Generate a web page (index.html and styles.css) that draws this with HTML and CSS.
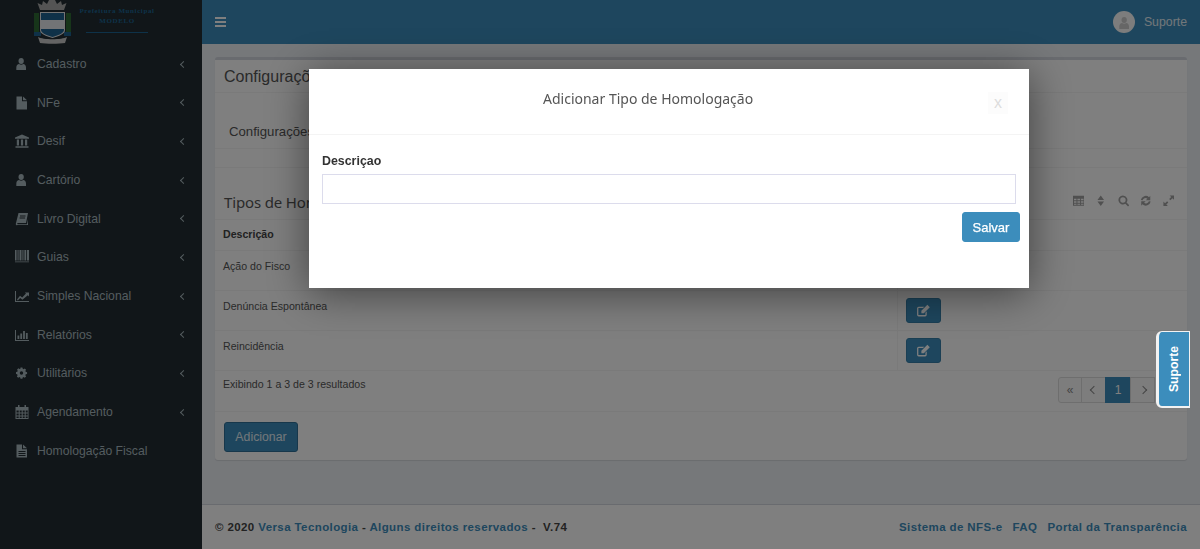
FILE: index.html
```html
<!DOCTYPE html>
<html lang="pt-BR">
<head>
  <meta charset="UTF-8" />
  <title>Tipos de Homologação</title>
  <link rel="stylesheet" href="styles.css">
</head>
<body>
  <svg class="sprites" aria-hidden="true">
    <defs>
      <symbol id="i-user" viewBox="0 0 14 14"><g transform="scale(.88 1)"><circle cx="7" cy="4" r="3"/><path d="M1.500 13v-2.600C1.500 8.400 3 7 4.600 7c.7.500 1.500.8 2.400.8s1.700-.3 2.400-.8c1.600 0 3.100 1.400 3.100 3.400V13z"/></g></symbol>
      <symbol id="i-file" viewBox="0 0 14 14"><path d="M1.500 .5h5.500v4.700h5V13.500H1.500z"/><path d="M8 .5l4 3.700H8z"/></symbol>
      <symbol id="i-bank" viewBox="0 0 14 14"><path d="M7 .5 14 3.500v1.200H0V3.500zM.5 12.200h13v1.500H.5zM1.800 5.500h2.200v6H1.800zM5.900 5.500h2.200v6H5.900zM10 5.500h2.200v6H10z"/></symbol>
      <symbol id="i-book" viewBox="0 0 14 14"><path d="M3.500 1H13l-2 10H2.800c-.8 0-.8 1.300 0 1.300H12l1-5v5.700H2.500C1 14 .5 12.500 1 11zM5 3.500v1h5.500v-1zM4.600 5.500v1h5.500v-1z" fill-rule="evenodd"/></symbol>
      <symbol id="i-barcode" viewBox="0 0 14 14"><path d="M0 0h1.600v10.500H0zM2.500 0h1.100v10.500H2.500zM4.500 0h2v10.500h-2zM7.400 0h1.100v10.500H7.400zM9.400 0h1.800v10.500H9.400zM12 0h2v10.500h-2zM0 11.500h14v.8H0z"/></symbol>
      <symbol id="i-line" viewBox="0 0 14 14"><path d="M0 2h1v10h13v1H0z"/><path d="M2 10.500 5 6.800l2.200 1.700L11 4.500 9.800 3.500H14v3.900l-1.200-1.200-5.400 4.600L5.200 9l-2.400 2.500z"/></symbol>
      <symbol id="i-chart" viewBox="0 0 14 14"><path d="M0 2h1v10h13v1H0zM2.500 7.500h1.800V11H2.500zM5.300 5.500h1.800V11H5.300zM8.100 3h1.800v8H8.100zM10.900 5h1.800v6h-1.800z"/></symbol>
      <symbol id="i-cog" viewBox="0 0 14 14"><path fill-rule="evenodd" transform="translate(1 1.500) scale(.78)" d="M5.800 0h2.400l.4 1.700 1.100.5 1.500-.9 1.700 1.700-.9 1.500.5 1.100 1.700.4v2.400l-1.700.4-.5 1.100.9 1.500-1.700 1.700-1.500-.9-1.100.5-.4 1.700H5.800l-.4-1.700-1.100-.5-1.500.9-1.700-1.700.9-1.500-.5-1.100L0 8.200V5.800l1.700-.4.500-1.100-.9-1.500L3 1.100l1.500.9 1.100-.5zM7 4.800a2.200 2.200 0 1 0 0 4.400 2.200 2.200 0 0 0 0-4.400z"/></symbol>
      <symbol id="i-calendar" viewBox="0 0 14 14"><path fill-rule="evenodd" d="M3 0h1.500v2H9.500V0H11v2h2.500v12H.5V2H3zM1.500 5.500v2h2.200v-2zm3.200 0v2h2v-2zm3 0v2h2v-2zm3 0v2h2v-2zM1.500 8.500v2h2.200v-2zm3.200 0v2h2v-2zm3 0v2h2v-2zm3 0v2h2v-2zM1.500 11.500V13h2.200v-1.500zm3.200 0V13h2v-1.500zm3 0V13h2v-1.500zm3 0V13h2v-1.500z"/></symbol>
      <symbol id="i-table" viewBox="0 0 14 14"><path fill-rule="evenodd" d="M0 1h14v12H0zM1.200 4.500v2h3v-2zm4.200 0v2h3.200v-2zm4.400 0v2h3v-2zM1.200 7.500v2h3v-2zm4.200 0v2h3.200v-2zm4.400 0v2h3v-2zM1.200 10.500V12h3v-1.500zm4.200 0V12h3.200v-1.500zm4.400 0V12h3v-1.500z"/></symbol>
      <symbol id="i-doc" viewBox="0 0 14 14"><path fill-rule="evenodd" d="M1.500 .5h5.500v4.700h5v8.300H1.500zM3.500 7v1h7V7zM3.500 9v1h7V9zM3.500 11v1h7v-1z"/><path d="M8 .5l4 3.700H8z"/></symbol>
      <symbol id="i-edit" viewBox="0 0 14 14"><path d="M10 7.800V11a1.500 1.500 0 0 1-1.500 1.500h-6A1.500 1.500 0 0 1 1 11V5a1.500 1.500 0 0 1 1.500-1.500h5.200L6.500 4.700h-4a.3.3 0 0 0-.3.3v6c0 .2.1.3.3.3h6c.2 0 .3-.1.3-.3V9z"/><path d="M5 7.200 10.600 1.600l2.300 2.300-5.600 5.600H5z"/></symbol>
    </defs>
  </svg>

  <aside class="sidebar">
    <div class="logo">
      <svg class="crest" viewBox="0 0 38 44" aria-hidden="true">
        <path d="M6 10 3.500 3 8 5 9 1l4 3 2-4h6l2 4 4-3 1 4 4.500-2L30 10z" fill="#a8a8a8"/>
        <path d="M0 13h5v19H0zM32 13h5v19h-5z" fill="#2e6b35"/>
        <path d="M0 32h7v4H0zM30 32h7v4h-7z" fill="#1f6291"/>
        <path d="M6 12h25v18c0 4-6 6-12.500 8C12 36 6 34 6 30z" fill="#e8e8e8"/>
        <path d="M7 13h23v17c0 3-5 5-11.500 7C12 35 7 33 7 30z" fill="#1f6291"/>
        <path d="M7 20h23v9H7z" fill="#e4e8ec"/>
        <path d="M4 37c5 3 24 3 29 0l-2 6c-6 1-19 1-25 0z" fill="#c8c8c8"/>
      </svg>
      <div class="logo-text">
        <span>Prefeitura Municipal</span>
        <span>MODELO</span>
        <i class="logo-line"></i>
      </div>
    </div>
    <ul class="menu">
      <li><svg class="ico"><use href="#i-user"/></svg>Cadastro<b class="arrow"></b></li>
      <li><svg class="ico"><use href="#i-file"/></svg>NFe<b class="arrow"></b></li>
      <li><svg class="ico"><use href="#i-bank"/></svg>Desif<b class="arrow"></b></li>
      <li><svg class="ico"><use href="#i-user"/></svg>Cartório<b class="arrow"></b></li>
      <li><svg class="ico"><use href="#i-book"/></svg>Livro Digital<b class="arrow"></b></li>
      <li><svg class="ico"><use href="#i-barcode"/></svg>Guias<b class="arrow"></b></li>
      <li><svg class="ico"><use href="#i-line"/></svg>Simples Nacional<b class="arrow"></b></li>
      <li><svg class="ico"><use href="#i-chart"/></svg>Relatórios<b class="arrow"></b></li>
      <li><svg class="ico"><use href="#i-cog"/></svg>Utilitários<b class="arrow"></b></li>
      <li><svg class="ico"><use href="#i-calendar"/></svg>Agendamento<b class="arrow"></b></li>
      <li><svg class="ico"><use href="#i-doc"/></svg>Homologação Fiscal</li>
    </ul>
  </aside>

  <div class="main">
    <header class="topbar">
      <div class="burger"><i></i><i></i><i></i></div>
      <div class="account">
        <span class="avatar"><svg viewBox="0 0 14 14"><use href="#i-user"/></svg></span>
        Suporte
      </div>
    </header>

    <main class="content">
      <section class="box">
        <h2 class="box-title">Configurações</h2>
        <div class="config-row">Configurações</div>
        <div class="spacer-row"></div>
        <div class="list-head">
          <h3>Tipos de Homologação</h3>
          <div class="tools">
            <svg viewBox="0 0 14 14"><use href="#i-table"/></svg>
            <svg viewBox="0 0 14 14"><path d="M7 .5l4 5.500H3zM7 13.500 3 8h8z"/></svg>
            <svg viewBox="0 0 14 14"><path fill-rule="evenodd" d="M6 .5a5.500 5.500 0 0 1 4.400 8.700l3.300 3.300-1.500 1.500-3.300-3.300A5.500 5.500 0 1 1 6 .5zm0 2.200a3.300 3.300 0 1 0 0 6.600 3.300 3.300 0 0 0 0-6.600z"/></svg>
            <svg viewBox="0 0 14 14"><path d="M1 6a6 6 0 0 1 10-3.300L12.500 1v5.500H7l2-2A3.800 3.800 0 0 0 3.200 6.500zM13 8A6 6 0 0 1 3 11.300L1.500 13V7.500H7l-2 2a3.800 3.800 0 0 0 5.800-2z"/></svg>
            <svg viewBox="0 0 14 14"><path d="M8 .5h5.500V6l-2-2L9 6.500 7.500 5 10 2.500zM6 13.500H.5V8l2 2L5 7.500 6.500 9 4 11.500z"/></svg>
          </div>
        </div>
        <div class="row row-head"><div class="cell-name">Descrição</div><div class="cell-act"></div></div>
        <div class="row"><div class="cell-name">Ação do Fisco</div><div class="cell-act"><span class="btn-edit"><svg viewBox="0 0 14 14"><use href="#i-edit"/></svg></span></div></div>
        <div class="row"><div class="cell-name">Denúncia Espontânea</div><div class="cell-act"><span class="btn-edit"><svg viewBox="0 0 14 14"><use href="#i-edit"/></svg></span></div></div>
        <div class="row"><div class="cell-name">Reincidência</div><div class="cell-act"><span class="btn-edit"><svg viewBox="0 0 14 14"><use href="#i-edit"/></svg></span></div></div>
        <div class="table-foot">
          <span>Exibindo 1 a 3 de 3 resultados</span>
          <ul class="pager">
            <li>«</li>
            <li><b class="chev left"></b></li>
            <li class="active">1</li>
            <li><b class="chev right"></b></li>
          </ul>
        </div>
        <div class="box-foot"><button class="btn-add" type="button">Adicionar</button></div>
      </section>
    </main>

    <footer class="footer">
      <div>© 2020 <a>Versa Tecnologia</a> - <a>Alguns direitos reservados</a> -&nbsp; V.74</div>
      <div class="footer-links"><a>Sistema de NFS-e</a><a>FAQ</a><a>Portal da Transparência</a></div>
    </footer>
  </div>

  <div class="backdrop"></div>

  <a class="support-tab"><span>Suporte</span></a>

  <div class="modal">
    <div class="modal-head">
      <h4>Adicionar Tipo de Homologação</h4>
      <span class="close">x</span>
    </div>
    <div class="modal-body">
      <label for="descricao">Descriçao</label>
      <input id="descricao" type="text">
      <div class="modal-actions"><button class="btn-save" type="button">Salvar</button></div>
    </div>
  </div>
</body>
</html>
```

FILE: styles.css
```css
* {
  box-sizing: border-box;
}
html, body {
  height: 100%;
}
body {
  margin: 0;
  display: flex;
  overflow: hidden;
  font-family: "Liberation Sans", Arial, sans-serif;
  font-size: 12px;
  color: #333;
  background: #ecf0f5;
}
.sprites {
  display: none;
}

/* sidebar */
.sidebar {
  width: 202px;
  flex: none;
  background: #222d32;
  color: #a9b8bf;
}
.logo {
  height: 44px;
  display: flex;
  padding-left: 34px;
  overflow: hidden;
}
.crest {
  width: 38px;
  height: 44px;
  flex: none;
}
.logo-text {
  width: 76px;
  margin-left: 7px;
  padding-top: 8px;
  display: flex;
  flex-direction: column;
  align-items: center;
  gap: 3px;
  font-family: "Liberation Serif", serif;
  font-weight: bold;
  font-size: 7px;
  letter-spacing: .6px;
  line-height: 7px;
  white-space: nowrap;
  color: #1c6493;
}
.logo-line {
  width: 62px;
  height: 1px;
  margin-top: 4px;
  background: #1c6493;
}
.menu {
  list-style: none;
  margin: 0;
  padding: .5px 0 0;
}
.menu li {
  height: 38.7px;
  padding-left: 15px;
  display: flex;
  align-items: center;
  position: relative;
  font-size: 12.2px;
}
.ico {
  width: 14px;
  height: 14px;
  margin-right: 8px;
  fill: #a9b8bf;
  flex: none;
}
.arrow {
  position: absolute;
  right: 16px;
  top: 17px;
  width: 5px;
  height: 5px;
  border-left: 1.5px solid #a9b8bf;
  border-bottom: 1.5px solid #a9b8bf;
  transform: rotate(45deg);
}

/* main column */
.main {
  flex: 1;
  min-width: 0;
  display: flex;
  flex-direction: column;
}
.topbar {
  height: 44px;
  flex: none;
  background: #3c8dbc;
  color: #e4eef5;
  display: flex;
  align-items: center;
  justify-content: space-between;
  padding: 0 13px;
}
.burger {
  width: 11px;
  display: flex;
  flex-direction: column;
  gap: 2px;
}
.burger i {
  height: 2px;
  background: #fff;
}
.account {
  display: flex;
  align-items: center;
  gap: 9px;
  font-size: 12.3px;
}
.avatar {
  width: 22px;
  height: 22px;
  border-radius: 50%;
  background: #fafafa;
  fill: #ccc;
  padding: 5px 4px 3px 5px;
}
.avatar svg {
  display: block;
  width: 14px;
  height: 14px;
}

.content {
  flex: 1;
  padding: 13px 13px 0;
}
.box {
  height: 403px;
  background: #fff;
  border-top: 3px solid #d2d6de;
  border-radius: 3px;
  box-shadow: 0 1px 1px rgba(0,0,0,.1);
}
.box-title {
  margin: 0;
  height: 33px;
  padding: 7px 9px 0;
  font-size: 16px;
  font-weight: normal;
  line-height: 20px;
  color: #555;
  border-bottom: 1px solid #f4f4f4;
}
.config-row {
  height: 56px;
  padding: 31px 0 0 14px;
  font-size: 13.2px;
  line-height: 16px;
  color: #555;
  border-bottom: 1px solid #f4f4f4;
}
.spacer-row {
  height: 19px;
  border-bottom: 1px solid #f4f4f4;
}
.list-head {
  height: 52px;
  display: flex;
  justify-content: space-between;
  padding: 24px 13px 0 9px;
  border-bottom: 1px solid #f4f4f4;
}
.list-head h3 {
  margin: 0;
  font-family: "Noto Sans", sans-serif;
  font-size: 15px;
  font-weight: normal;
  line-height: 20px;
  letter-spacing: -.15px;
  color: #555;
}
.tools {
  display: flex;
  gap: 11px;
  padding-top: 3px;
  fill: #a0a0a0;
}
.tools svg {
  width: 11.5px;
  height: 11.5px;
}
.row {
  height: 40px;
  display: flex;
  font-size: 10.6px;
  color: #555;
  border-bottom: 1px solid #f4f4f4;
}
.row-head {
  height: 31px;
  font-weight: bold;
  color: #444;
}
.cell-name {
  width: 683px;
  padding: 7.5px 8px 0;
  line-height: 14px;
  border-right: 1px solid #f4f4f4;
}
.row-head .cell-name {
  border: 0;
  padding-top: 7px;
}
.cell-act {
  flex: 1;
  padding: 7px 8px 0;
}
.btn-edit {
  display: flex;
  align-items: center;
  justify-content: center;
  width: 35px;
  height: 25px;
  background: #3c8dbc;
  border: 1px solid #367fa9;
  border-radius: 3px;
  fill: #fff;
}
.btn-edit svg {
  width: 15px;
  height: 15px;
}
.table-foot {
  height: 41px;
  display: flex;
  justify-content: space-between;
  padding: 6px 32px 0 8px;
  font-size: 10.6px;
  line-height: 14px;
  color: #555;
  border-bottom: 1px solid #f4f4f4;
}
.pager {
  list-style: none;
  display: flex;
  margin: 0;
  padding: 0;
  height: 26px;
  font-size: 12px;
  color: #888;
}
.pager li {
  width: 25px;
  border: 1px solid #ddd;
  margin-left: -1px;
  background: #fafafa;
  display: flex;
  align-items: center;
  justify-content: center;
}
.pager li:first-child {
  width: 24px;
  border-radius: 3px 0 0 3px;
}
.pager .active {
  width: 26px;
  background: #3c8dbc;
  border-color: #3c8dbc;
  color: #fff;
}
.chev {
  width: 6px;
  height: 6px;
  border-left: 1.5px solid #888;
  border-bottom: 1.5px solid #888;
}
.chev.left {
  transform: rotate(45deg);
}
.chev.right {
  transform: rotate(-135deg);
}
.box-foot {
  padding: 10px 9px 0;
}
.btn-add {
  width: 74px;
  height: 30px;
  padding: 0;
  background: #3c8dbc;
  border: 1px solid #2f6f96;
  border-radius: 3px;
  color: #e4eef5;
  font: 12.3px "Liberation Sans", Arial, sans-serif;
}

.footer {
  height: 45px;
  flex: none;
  background: #fff;
  border-top: 1px solid #d2d6de;
  display: flex;
  align-items: center;
  justify-content: space-between;
  padding: 0 13px;
  font-size: 11.5px;
  font-weight: bold;
  letter-spacing: .4px;
  color: #444;
}
.footer a {
  color: #3c8dbc;
}
.footer-links {
  display: flex;
  gap: 10px;
}

/* modal layer */
.backdrop {
  position: fixed;
  inset: 0;
  background: rgba(0,0,0,.5);
}
.support-tab {
  position: fixed;
  left: 1156px;
  top: 331px;
  width: 34px;
  height: 77px;
  background: #3c8dbc;
  border: 2px solid #f2f2f2;
  border-width: 1px 1px 2px 3px;
  border-radius: 6px 0 0 6px;
  color: #fff;
  font-size: 12.2px;
  font-weight: bold;
  display: flex;
  align-items: center;
  justify-content: center;
}
.support-tab span {
  writing-mode: vertical-rl;
  transform: rotate(180deg);
}
.modal {
  position: fixed;
  left: 309px;
  top: 69px;
  width: 720px;
  height: 219px;
  background: #fff;
  box-shadow: 0 5px 40px rgba(0,0,0,.5);
}
.modal-head {
  height: 66px;
  display: flex;
  position: relative;
  border-bottom: 1px solid #f4f4f4;
  padding: 20px 0 0 234px;
}
.modal-head h4 {
  margin: 0;
  font-family: "Noto Sans", sans-serif;
  font-size: 14px;
  font-weight: normal;
  line-height: 20px;
  color: #555;
}
.close {
  position: absolute;
  left: 679px;
  top: 23px;
  width: 20px;
  height: 22px;
  background: #fcfcfc;
  color: #dcdcdc;
  font-size: 16px;
  line-height: 22px;
  text-align: center;
}
.modal-body {
  padding: 18px 9px 0 13px;
}
.modal-body label {
  display: block;
  font-size: 12.4px;
  font-weight: bold;
  line-height: 16px;
  margin-bottom: 5px;
}
.modal-body input {
  display: block;
  width: 694px;
  height: 30px;
  border: 1px solid #dcdcec;
  outline: 0;
}
.modal-actions {
  display: flex;
  justify-content: flex-end;
  margin-top: 8px;
}
.btn-save {
  width: 58px;
  height: 30px;
  padding: 0;
  background: #3c8dbc;
  border: 1px solid #3c8dbc;
  border-radius: 3px;
  color: #fff;
  font: 13px "Liberation Sans", Arial, sans-serif;
  -webkit-text-stroke: .25px #fff;
}
```
